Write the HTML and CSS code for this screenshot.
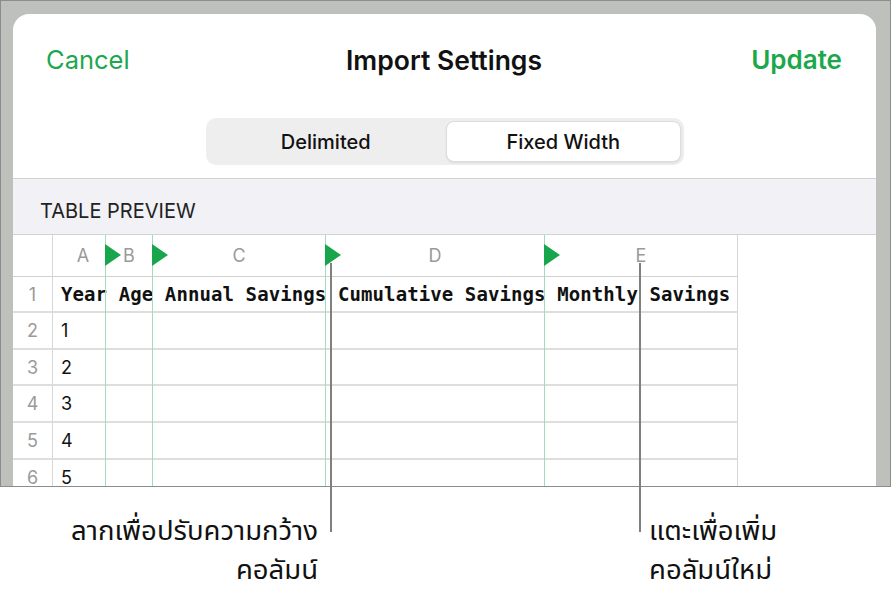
FILE: index.html
```html
<!DOCTYPE html>
<html lang="th">
<head>
  <meta charset="UTF-8" />
  <meta name="viewport" content="width=device-width, initial-scale=1" />
  <title>Import Settings</title>
  <link rel="stylesheet" href="styles.css">
</head>
<body>
  <div class="figure">

    <!-- iPad screen crop -->
    <div class="screen">
      <div class="sheet">
        <header class="nav">
          <span class="nav-btn">Cancel</span>
          <span class="nav-title">Import Settings</span>
          <span class="nav-btn nav-btn-strong">Update</span>
        </header>

        <div class="segmented">
          <span class="segment">Delimited</span>
          <span class="segment selected">Fixed Width</span>
        </div>

        <div class="section-band">TABLE PREVIEW</div>

        <div class="preview">
          <div class="grid">
            <div class="cell corner"></div>
            <div class="cell col-head col-a">A</div>
            <div class="cell col-head">B</div>
            <div class="cell col-head">C</div>
            <div class="cell col-head">D</div>
            <div class="cell col-head">E</div>

            <div class="cell row-head">1</div>
            <div class="cell mono-row">Year Age Annual Savings Cumulative Savings Monthly Savings</div>

            <div class="cell row-head">2</div>
            <div class="cell value">1</div><div class="cell"></div><div class="cell"></div><div class="cell"></div><div class="cell"></div>
            <div class="cell row-head">3</div>
            <div class="cell value">2</div><div class="cell"></div><div class="cell"></div><div class="cell"></div><div class="cell"></div>
            <div class="cell row-head">4</div>
            <div class="cell value">3</div><div class="cell"></div><div class="cell"></div><div class="cell"></div><div class="cell"></div>
            <div class="cell row-head">5</div>
            <div class="cell value">4</div><div class="cell"></div><div class="cell"></div><div class="cell"></div><div class="cell"></div>
            <div class="cell row-head">6</div>
            <div class="cell value">5</div><div class="cell"></div><div class="cell"></div><div class="cell"></div><div class="cell"></div>
          </div>

          <!-- column break markers -->
          <div class="marker m1"><span class="flag"></span></div>
          <div class="marker m2"><span class="flag"></span></div>
          <div class="marker m3"><span class="flag"></span></div>
          <div class="marker m4"><span class="flag"></span></div>
        </div>
      </div>
    </div>

    <!-- callouts -->
    <div class="leader leader-drag"></div>
    <div class="leader leader-tap"></div>

    <div class="captions">
      <p class="caption caption-left">ลากเพื่อปรับความกว้าง<br>คอลัมน์</p>
      <p class="caption caption-right">แตะเพื่อเพิ่ม<br>คอลัมน์ใหม่</p>
    </div>
  </div>
</body>
</html>
```

FILE: styles.css
```css
body {
  margin: 0;
  background: #fff;
  font-family: Inter, "Noto Sans", sans-serif;
  color: #111;
}
.figure {
  position: relative;
  width: 891px;
  height: 596px;
  overflow: hidden;
}
/* Screen crop with grey bezel */
.screen {
  height: 487px;
  box-sizing: border-box;
  border: 1px solid #8c8c8c;
  background: #bec0bc;
  padding: 13px 14px 0 12px;
  overflow: hidden;
}
.sheet {
  background: #fff;
  border-radius: 16px 16px 0 0;
  height: 600px;
}
/* Nav bar */
.nav {
  height: 91px;
  display: grid;
  grid-template-columns: 1fr auto 1fr;
  align-items: center;
  padding: 0 34px 0 33px;
}
.nav-btn {
  color: #1ba84c;
  font-size: 25.5px;
}
.nav-btn-strong {
  font-weight: 600;
  font-size: 26px;
  text-align: right;
}
.nav-title {
  font-size: 26.5px;
  font-weight: 600;
}
/* Segmented control */
.segmented {
  width: 478px;
  height: 47px;
  box-sizing: border-box;
  margin: 13px auto 13px;
  padding: 3px;
  background: #eeeeef;
  border-radius: 10px;
  display: grid;
  grid-template-columns: 1fr 1fr;
  gap: 3px;
}
.segment {
  display: flex;
  align-items: center;
  justify-content: center;
  font-size: 20px;
  font-weight: 500;
  border-radius: 8px;
}
.segment.selected {
  background: #fff;
  border: 1px solid #dcdcdc;
  box-shadow: 0 1px 2px rgba(0, 0, 0, 0.08);
}
/* Section header */
.section-band {
  height: 57px;
  box-sizing: border-box;
  border-top: 1px solid #d2d2d2;
  border-bottom: 1px solid #d2d2d2;
  background: #f1f1f6;
  display: flex;
  align-items: center;
  padding: 8px 0 0 27px;
  font-size: 20px;
  color: #222;
}
/* Table preview */
.preview {
  position: relative;
}
.grid {
  display: grid;
  grid-template-columns: 40px 53px 47px 173px 219px 193px;
  grid-template-rows: 42px 36px repeat(5, 36.7px);
}
.cell {
  border-right: 1px solid #d6d6d6;
  border-bottom: 2px solid #dedede;
  display: flex;
  align-items: center;
  font-size: 18px;
}
.corner,
.col-head {
  border-bottom-width: 1px;
  border-bottom-color: #d0d0d0;
}
.col-head {
  justify-content: center;
  color: #9a9a9a;
}
.col-a {
  padding-left: 8px;
}
.row-head {
  justify-content: center;
  color: #9a9a9a;
}
.value {
  padding-left: 8px;
}
.mono-row {
  grid-column: 2 / 7;
  padding-left: 8px;
  font-family: "DejaVu Sans Mono", monospace;
  font-weight: bold;
  font-size: 19px;
  letter-spacing: 0.1px;
  white-space: nowrap;
}
/* Column break markers */
.marker {
  position: absolute;
  top: 0;
  bottom: -200px;
  width: 1px;
  background: #a3dcbc;
}
.m1 { left: 92px; }
.m2 { left: 139px; }
.m3 { left: 312px; }
.m4 { left: 531px; }
.flag {
  position: absolute;
  top: 9px;
  left: 0;
  width: 0;
  height: 0;
  border-left: 16px solid #17a64b;
  border-top: 11px solid transparent;
  border-bottom: 11px solid transparent;
}
/* Callouts */
.leader {
  position: absolute;
  top: 263px;
  height: 269px;
  width: 2px;
  background: #7f7f7f;
}
.leader-drag { left: 330px; }
.leader-tap { left: 639px; }
.captions {
  display: flex;
  margin-top: 25px;
}
.caption {
  margin: 0;
  font-family: "Noto Sans Thai", "Noto Sans", sans-serif;
  font-size: 27.5px;
  line-height: 39px;
}
.caption-left {
  width: 318px;
  text-align: right;
}
.caption-right {
  margin-left: 331px;
}
```
